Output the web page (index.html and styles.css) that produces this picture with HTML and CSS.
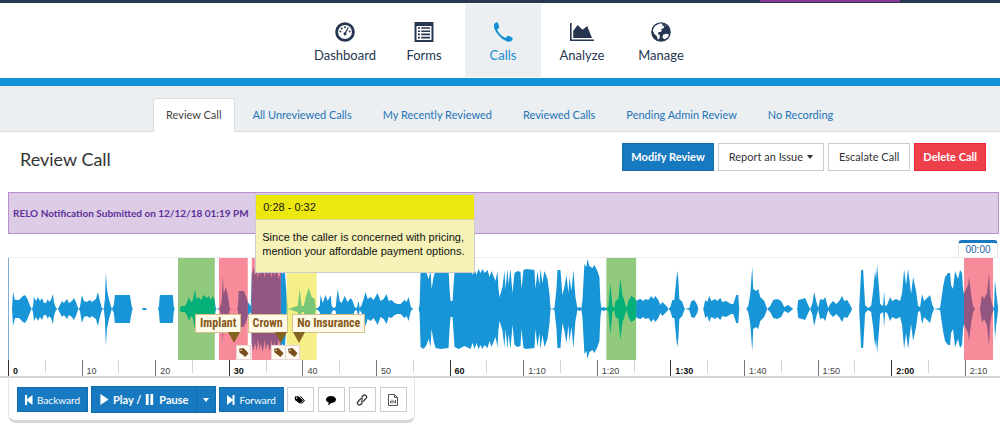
FILE: index.html
```html
<!DOCTYPE html>
<html lang="en">
<head>
<meta charset="utf-8">
<title>Review Call</title>
<link rel="stylesheet" href="styles.css">
</head>
<body>
<div class="topline"><span class="topline-accent"></span></div>
<nav class="mainnav" aria-label="Main">
  <a class="nav-item" href="#"><svg class="nav-icon" viewBox="0 0 20 20"><circle cx="10" cy="10" r="8.4" fill="none" stroke="currentColor" stroke-width="2.8"/><circle cx="5.4" cy="9.6" r="1"/><circle cx="6.7" cy="6.4" r="1"/><circle cx="10" cy="5.2" r="1"/><circle cx="14.7" cy="9.6" r="1"/><path d="M12.8 5.2l1 .5-2.6 5.2a1.500 1.500 0 1 1-1.200-.6z"/></svg>Dashboard</a>
  <a class="nav-item" href="#"><svg class="nav-icon" viewBox="0 0 20 20"><path fill-rule="evenodd" d="M.5 0h19v20H.5zM2.5 4v14h15V4zM4 5.200h2v1.600H4zm3.200 0H16v1.600H7.200zM4 8.400h2V10H4zm3.200 0H16V10H7.200zM4 11.600h2v1.600H4zm3.200 0H16v1.600H7.200zM4 14.800h2v1.600H4zm3.200 0H16v1.600H7.200z"/></svg>Forms</a>
  <a class="nav-item active" href="#" aria-current="page"><svg class="nav-icon" viewBox="0 0 20 20"><path d="M1.200 2.100C2.100.9 3.500.2 4.400.3c.7.800 1.500 3.500 1.800 4.800.1.800-1.800 1.700-1.900 2.500.6 3 5.200 7.800 8.300 8.100.8-.1 1.500-2 2.500-2 1.200.3 3.900 1.500 4.600 2.300.2 1-.6 2.600-1.800 3.300C12.800 22-.8 9.600 1.200 2.100z"/></svg>Calls</a>
  <a class="nav-item" href="#"><svg class="nav-icon wide" viewBox="0 0 24 20"><path d="M0 1h1.600v16.400H24V19H0z"/><path d="M3.200 16V9l4.300-6 5.200 4.800L17.200 4 22 16z"/></svg>Analyze</a>
  <a class="nav-item" href="#"><svg class="nav-icon" viewBox="0 0 20 20"><circle cx="10" cy="10" r="9.800"/><path fill="#fff" d="M8.500 1.500l3.200.3-.8 1.700 1.700.2.600 1.600-1.600 1.500-1.500.5.800 1.400-1.300 1.200-2.300.3-.2 1.800 1.800 1.300-.4 3.200-1.700 1.300-.9-3.500-2.600-2.400-1.300-3L2 7.400l2-3.500zM12 12.800l3.200-1 2.900.8-1.600 3-2.700 1.600-2.400-1.500zM13.800 2.900l1.200.8-.7.900z"/></svg>Manage</a>
</nav>
<nav class="tabs" aria-label="Calls">
  <a class="tab current" href="#" aria-current="page">Review Call</a>
  <a class="tab" href="#">All Unreviewed Calls</a>
  <a class="tab" href="#">My Recently Reviewed</a>
  <a class="tab" href="#">Reviewed Calls</a>
  <a class="tab" href="#">Pending Admin Review</a>
  <a class="tab" href="#">No Recording</a>
</nav>
<main>
  <header class="page-head">
    <h1>Review Call</h1>
    <div class="actions">
      <button class="btn primary">Modify Review</button>
      <button class="btn">Report an Issue<span class="caret"></span></button>
      <button class="btn">Escalate Call</button>
      <button class="btn danger">Delete Call</button>
    </div>
  </header>
  <div class="notice">RELO Notification Submitted on 12/12/18 01:19 PM
    <aside class="note">
      <h2>0:28 - 0:32</h2>
      <p>Since the caller is concerned with pricing,<br>mention your affordable payment options.</p>
    </aside>
  </div>
  <section class="player" aria-label="Recording">
    <div class="wave">
      <svg class="wave-art" viewBox="8 -51 990 102" preserveAspectRatio="none">
        <defs>
          <path id="envelope"/>
          <clipPath id="clip-green"><path d="M177-51h37v102h-37zM606-51h30v102h-30z"/></clipPath>
          <clipPath id="clip-pink"><path d="M218-51h29v102h-29zM251-51h29v102h-29zM964-51h29v102h-29z"/></clipPath>
          <clipPath id="clip-yellow"><path d="M286-51h30v102h-30z"/></clipPath>
        </defs>
        <use href="#envelope" fill="#1795d6"/>
        <g clip-path="url(#clip-green)"><path fill="#91ca7c" d="M8-51h990v102H8z"/><use href="#envelope" fill="#04b077"/></g>
        <g clip-path="url(#clip-pink)"><path fill="#f78b99" d="M8-51h990v102H8z"/><use href="#envelope" fill="#925680"/></g>
        <g clip-path="url(#clip-yellow)"><path fill="#f5ef87" d="M8-51h990v102H8z"/><use href="#envelope" fill="#78c878"/></g>
      </svg>
      <span class="flag flag-implant">Implant</span>
      <span class="flag flag-crown">Crown</span>
      <span class="flag flag-insurance">No Insurance</span>
      <button class="pin pin-implant" aria-label="Implant tag"><svg viewBox="0 0 10 10"><path fill-rule="evenodd" d="M1 1.600L5 1l4.600 4.600-2.800 3.400L1.400 5zM2.300 2.400v1.200h1.100V2.400z"/></svg></button>
      <button class="pin pin-crown" aria-label="Crown tag"><svg viewBox="0 0 10 10"><path fill-rule="evenodd" d="M1 1.600L5 1l4.600 4.600-2.800 3.400L1.400 5zM2.300 2.400v1.200h1.100V2.400z"/></svg></button>
      <button class="pin pin-insurance" aria-label="No Insurance tag"><svg viewBox="0 0 10 10"><path fill-rule="evenodd" d="M1 1.600L5 1l4.600 4.600-2.800 3.400L1.400 5zM2.300 2.400v1.200h1.100V2.400z"/></svg></button>
      <span class="clock">00:00</span>
    </div>
    <div class="scale">
      <span class="tick major">0</span><span class="tick">10</span><span class="tick">20</span><span class="tick major">30</span><span class="tick">40</span><span class="tick">50</span><span class="tick major">60</span><span class="tick">1:10</span><span class="tick">1:20</span><span class="tick major">1:30</span><span class="tick">1:40</span><span class="tick">1:50</span><span class="tick major">2:00</span><span class="tick">2:10</span>
    </div>
  </section>
  <div class="controls-row">
    <div class="controls">
      <button class="btn primary"><svg class="glyph" viewBox="0 0 8 10"><path d="M0 0h2v4.200L7.500 0v10L2 5.800V10H0z"/></svg>Backward</button>
      <div class="split">
        <button class="btn primary large"><svg class="glyph" viewBox="0 0 9 12"><path d="M0 0l9 6-9 6z"/></svg>Play / <svg class="glyph pause" viewBox="0 0 8 12"><path d="M0 0h3v12H0zM5 0h3v12H5z"/></svg>Pause</button>
        <button class="btn primary large more" aria-label="Playback options"><span class="caret"></span></button>
      </div>
      <button class="btn primary"><svg class="glyph" viewBox="0 0 8 10"><path d="M7.500 0h-2v4.200L0 0v10l5.500-4.200V10h2z"/></svg>Forward</button>
      <button class="btn icon" aria-label="Tags"><svg viewBox="0 0 12 12"><path fill-rule="evenodd" d="M.8 2.500l3.700-.3L9 6.500 6.200 9.800.9 6zM2 3.400v1.300h1.200V3.400z"/><path d="M5.500 2.200h1.200L11 6.500 8 9.800l-.8-.5 2.600-2.800z"/></svg></button>
      <button class="btn icon" aria-label="Comment"><svg viewBox="0 0 12 12"><path d="M6 2c2.800 0 5 1.500 5 3.600S8.800 9.100 6 9.100c-.8 1.300-2 1.900-3.200 1.900.7-.7 1-1.500.9-2.400C2 8 1 6.900 1 5.600 1 3.500 3.200 2 6 2z"/></svg></button>
      <button class="btn icon" aria-label="Link"><svg viewBox="0 0 12 12" fill="none" stroke="#333" stroke-width="1.300"><path d="M5.500 3.500l1.700-2a2 2 0 0 1 3 2.600L8 6.600a2 2 0 0 1-3 0M6.500 8.500l-1.700 2a2 2 0 0 1-3-2.600L4 5.400a2 2 0 0 1 3 0"/></svg></button>
      <button class="btn icon" aria-label="Audio file"><svg viewBox="0 0 12 12" fill="none" stroke="#555"><path d="M1.500.5h6l3 3v8h-9zM7.500.5v3h3M3.500 7v2M5 5.500v4M6.800 6.500v2.500M8.500 6v3.500"/></svg></button>
    </div>
  </div>
</main>
<script src="wave.js"></script>
</body>
</html>
```
FILE: styles.css
```css
* { box-sizing: border-box; }
body { margin: 0; background: #fff; color: #333; font: 11px/16px Lato, "Open Sans", sans-serif; }
a { text-decoration: none; }
button { font: inherit; margin: 0; }
h1, h2, p { margin: 0; font-weight: 400; }

.topline { height: 3px; background: #26374f; }
.topline-accent { display: block; height: 2px; width: 14%; margin-left: 76%; background: #893d98; }

.mainnav { display: flex; justify-content: center; gap: 3px; padding: 1px 0 1px 6px; }
.nav-item { width: 76px; height: 73px; padding-top: 18px; display: flex; flex-direction: column; align-items: center; gap: 4px; color: #263650; font-size: 13px; line-height: 18px; }
.nav-item.active { background: #ebeff1; color: #168ed2; }
.nav-icon { width: 20px; height: 20px; fill: currentColor; }
.nav-icon.wide { width: 24px; }

.tabs { display: flex; padding: 12px 0 0 153px; gap: 5px; background: #ebeff1; border-top: 8px solid #1193d5; border-bottom: 1px solid #d9dcde; }
.tab { margin-bottom: -1px; padding: 8px 12px 9px; border: 1px solid transparent; border-bottom: 0; border-radius: 3px 3px 0 0; color: #2573b7; }
.tab.current { background: #fff; border-color: #d9dcde; color: #444; }

.page-head { display: flex; justify-content: space-between; align-items: center; padding: 11px 14px 21px 20px; }
.page-head h1 { padding-top: 4px; font-size: 18px; line-height: 24px; color: #333; }
.actions { display: flex; gap: 4px; }
.btn { display: flex; align-items: center; justify-content: center; padding: 4px 10px; border: 1px solid #ccc; background: #fff; color: #333; white-space: nowrap; line-height: 18px; }
.btn.primary { background: #1779bf; border-color: #116bad; color: #fff; }
.btn.danger { background: #ee404a; border-color: #ee2637; color: #fff; }
.actions .primary, .actions .danger { padding: 4px 8px; font-weight: 700; }
.caret { border: 3px solid transparent; border-top: 4px solid currentColor; border-bottom: 0; }
.actions .caret { margin-left: 4px; }

.notice { position: relative; margin: 0 1px 0 8px; padding: 12px 4px; height: 42px; background: #dccce5; border: 1px solid #b98fce; color: #60309a; font-size: 10px; font-weight: 700; }
.note { position: absolute; z-index: 2; left: 24.9%; top: 1px; width: 220px; color: #111; background: #f5f1b7; border: 1px solid #ccc; font: 11px/14px "Liberation Sans", Arial, sans-serif; }
.note h2 { padding: 5px 7px; background: #ece80e; font: inherit; border-bottom: 1px solid #ddd9a0; }
.note p { padding: 10px 6px 14px; white-space: nowrap; }

.player { margin-top: 23px; padding: 0 2px 0 8px; border-bottom: 2px solid #d5d5d5; }
.wave { position: relative; border-top: 1px solid #eee; }
.wave-art { display: block; width: 100%; height: 102px; border-left: 1px solid #7facd0; }
.flag { position: absolute; top: 56px; height: 19px; padding: 0 4px; background: #fffae8; border: 1px solid #d6c18c; color: #87591a; font: bold 12px/17px "Liberation Sans Narrow", "Roboto Condensed", sans-serif; white-space: nowrap; }
.flag::after { content: ""; position: absolute; top: 100%; right: 0; border: 6px solid transparent; border-top: 11px solid #846321; border-bottom: 0; }
.flag-implant { left: 18.9%; }
.flag-crown { left: 24.2%; }
.flag-insurance { left: 28.7%; }
.flag-insurance::after { left: 0; right: auto; }
.pin { position: absolute; bottom: 0; width: 15px; height: 15px; padding: 1px; background: #fff9ef; border: 1px solid #e5d5dd; line-height: 0; }
.pin svg { width: 11px; height: 11px; fill: #78511f; }
.pin-implant { left: 23%; }
.pin-crown { left: 26.6%; }
.pin-insurance { left: 28%; }
.clock { position: absolute; right: 0; bottom: 100%; width: 40px; height: 18px; border: 1px solid #e5e5e5; border-top: 3px solid #1878bd; border-bottom: 0; border-radius: 4px 4px 0 0; color: #2460a8; font: 10px/14px "Liberation Sans", sans-serif; text-align: center; }

.scale { display: flex; overflow-x: clip; color: #444; font: 9px/10px "Liberation Sans", sans-serif; }
.tick { flex: 0 0 7.434%; height: 16px; padding: 6px 0 0 4px; border-left: 1px solid #777; background: linear-gradient(#d5d5d5, #d5d5d5) 50% 0 / 1px 13px no-repeat; }
.tick.major { border-color: #333; color: #111; font-weight: bold; }

.controls-row { display: flex; padding-left: 8px; }
.controls { display: flex; align-items: center; gap: 3px; padding: 8px 6px 7px 8px; border: 1px solid #e5e5e5; border-top: 0; border-bottom: 3px solid #d5d5d5; border-radius: 0 0 8px 8px; }
.controls .btn { height: 25px; padding: 0 7px; font-size: 10px; }
.controls .btn.large { height: 27px; padding: 0 8px; font-size: 11px; font-weight: 700; }
.split { display: flex; }
.controls .btn.more { padding: 0 6px; margin-left: -1px; }
.controls .btn.icon { width: 27px; padding: 0; margin-right: 1px; }
.icon svg { width: 12px; height: 12px; }
.glyph { width: 8px; height: 10px; margin-right: 4px; fill: currentColor; }
.large .glyph { width: 9px; height: 11px; }
.large .pause { margin-left: 4px; margin-right: 5px; }
```
FILE: wave.js
```js
// Loudness envelope of the recording: x position, amplitude.
var envelope = "8,0 11,0 12,17 14,9 18,9 20,11 22,13 24,14 26,11 28,6 30,1 31,0 32,3 33,12 35,8 37,12 39,8 41,11 43,6 45,6 47,10 48,7 50,9 52,15 53,7 55,1 57,0 58,2 61,8 63,6 66,10 68,6 71,8 73,11 75,7 77,1 78,0 79,2 81,14 83,8 86,7 89,9 91,7 95,10 97,17 99,8 101,1 102,0 103,1 104,10 105,37 106,20 108,10 110,3 111,0 113,4 114,14 129,14 131,2 132,0 141,0 142,1 145,1 146,0 157,0 158,2 159,14 172,14 173,2 174,0 179,0 180,3 184,3 186,6 188,12 190,7 192,9 194,19 196,10 198,12 200,9 203,14 206,11 208,13 210,9 212,13 214,8 215,1 216,0 219,1 221,8 222,34 223,15 225,22 227,14 229,1 230,0 236,0 237,1 238,18 243,18 246,11 247,7 250,3 251,35 253,42 254,33 256,42 257,30 259,41 260,34 262,43 264,31 265,41 267,34 269,42 271,31 272,42 274,33 276,42 278,30 280,38 282,35 284,40 286,12 287,0 291,1 293,2 297,3 299,20 301,3 303,3 305,12 308,21 311,12 314,10 315,1 317,1 319,3 320,14 322,6 325,14 327,8 330,14 331,3 333,1 335,2 337,20 339,8 341,6 344,13 347,7 350,11 352,8 354,2 356,1 358,8 359,1 361,4 363,10 365,17 367,10 370,12 373,9 377,16 380,8 383,10 386,15 388,8 391,9 394,6 397,5 400,5 404,9 406,7 408,12 410,3 411,1 413,0 418,0 419,4 420,38 423,40 426,36 428,30 430,38 431,20 433,32 435,39 440,40 448,39 449,20 450,8 452,8 454,38 458,40 464,37 470,40 472,34 474,40 476,34 478,40 480,36 482,40 484,36 487,39 489,32 491,38 493,33 495,28 497,38 498,20 499,12 500,15 502,22 504,38 505,20 507,40 508,25 510,40 512,16 514,36 517,38 520,37 521,20 523,39 526,40 534,39 535,20 537,38 539,24 540,40 542,26 544,38 547,30 549,15 550,1 551,0 554,1 556,20 557,39 560,39 562,14 564,22 566,34 568,16 569,32 571,18 573,39 575,12 577,1 579,2 581,1 582,8 584,45 586,42 587,50 589,43 592,41 594,44 597,38 599,32 600,8 601,1 603,2 606,1 608,2 610,26 612,3 614,1 615,8 618,10 620,31 622,14 624,8 626,1 628,8 631,13 634,11 636,8 637,9 640,10 643,8 645,10 648,9 651,13 653,10 655,13 658,9 660,4 662,7 664,5 667,2 668,0 670,2 672,9 674,9 676,30 677,38 678,30 679,10 682,7 684,1 685,0 689,1 691,8 694,9 697,4 698,0 703,0 705,9 707,7 709,13 711,8 715,10 717,8 720,11 722,7 726,8 729,6 731,5 733,5 736,14 738,14 739,0 746,0 748,3 750,15 752,42 753,20 756,18 758,20 760,12 764,8 767,0 770,3 773,9 777,10 781,8 784,2 788,4 793,0 797,0 798,9 802,10 805,11 808,4 810,0 812,5 814,17 816,8 818,1 820,10 823,9 825,12 828,1 830,5 833,8 836,5 839,8 842,13 844,8 847,9 850,4 852,0 859,0 861,39 863,39 865,4 868,1 871,3 873,18 875,38 876,30 877,44 879,20 880,5 883,3 884,18 885,3 887,4 890,12 892,8 896,10 900,8 902,16 904,40 906,24 908,40 911,15 913,32 916,18 918,3 920,2 922,15 924,8 927,11 930,14 932,5 934,0 940,1 943,22 945,32 948,36 950,36 951,24 953,20 955,38 958,30 960,39 962,36 963,20 964,15 966,20 968,24 969,32 971,15 973,3 975,0 980,0 982,14 984,10 987,16 989,36 990,15 992,5 994,0 995,30 996,18 998,2";

var points = envelope.split(" ").map(function (pair) { return pair.split(",").map(Number); });
var upper = points.map(function (p) { return p[0] + " " + -p[1]; });
var lower = points.map(function (p) { return p[0] + " " + p[1]; }).reverse();
document.getElementById("envelope").setAttribute("d", "M" + upper.concat(lower).join("L") + "Z");
```
